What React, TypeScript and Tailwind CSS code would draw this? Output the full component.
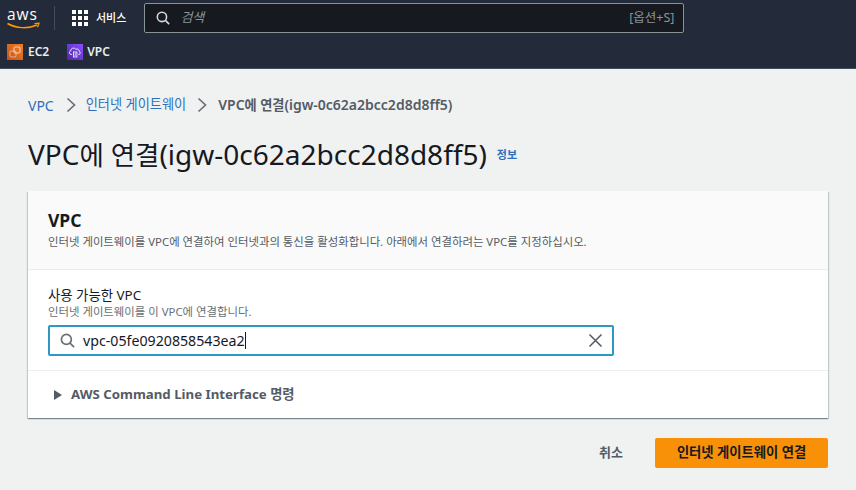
import React from "react";

function AwsLogo() {
  return (
    <svg width="34" height="31" viewBox="0 0 34 31" fill="none">
      <text x="0" y="18" fill="#fff" fontSize="15.5" fontFamily="'Open Sans', sans-serif" textLength="30">aws</text>
      <path d="M0.5 21.5C9 26.5 21 27 30 23" stroke="#f90" strokeWidth="1.5" fill="none" />
      <path d="M27.5 21.6L32 21.2L30.5 25.3" stroke="#f90" strokeWidth="1.2" fill="none" />
    </svg>
  );
}

function Ec2Icon() {
  return (
    <svg width="16" height="16" viewBox="0 0 16 16">
      <defs>
        <linearGradient id="ec" x1="0" y1="1" x2="1" y2="0">
          <stop offset="0" stopColor="#c8511b" />
          <stop offset="1" stopColor="#f08020" />
        </linearGradient>
      </defs>
      <rect width="16" height="16" fill="url(#ec)" />
      <rect x="3" y="7" width="6" height="6" rx="1" fill="none" stroke="#fff" strokeOpacity="0.55" strokeWidth="0.9" />
      <rect x="7" y="3" width="6" height="6" rx="1" fill="none" stroke="#fff" strokeOpacity="0.75" strokeWidth="0.9" />
    </svg>
  );
}

function VpcIcon() {
  return (
    <svg width="16" height="16" viewBox="0 0 16 16">
      <defs>
        <linearGradient id="vp" x1="0" y1="1" x2="1" y2="0">
          <stop offset="0" stopColor="#4d27a8" />
          <stop offset="1" stopColor="#8c4fff" />
        </linearGradient>
      </defs>
      <rect width="16" height="16" fill="url(#vp)" />
      <path d="M5 10.5H4a1.8 1.8 0 0 1-.3-3.5A2.8 2.8 0 0 1 8.8 5.3a2.2 2.2 0 0 1 3.4 2A1.7 1.7 0 0 1 12 10.5h-.8" fill="none" stroke="#fff" strokeWidth="0.8" />
      <rect x="6.5" y="8" width="3.4" height="5" fill="none" stroke="#fff" strokeWidth="0.8" />
      <path d="M8.2 9v3" stroke="#fff" strokeWidth="0.7" />
    </svg>
  );
}

function GridIcon() {
  return (
    <svg width="16" height="16" viewBox="0 0 16 16" fill="#fff">
      {[0, 6, 12].flatMap((y) =>
        [0, 6, 12].map((x) => <rect key={`${x}-${y}`} x={x} y={y} width="4" height="4" />)
      )}
    </svg>
  );
}

function SearchIcon({ color, size }: { color: string; size: number }) {
  return (
    <svg width={size} height={size} viewBox="0 0 16 16" fill="none" stroke={color} strokeWidth="1.8">
      <circle cx="6.8" cy="6.8" r="5.3" />
      <path d="M10.7 10.7L15 15" />
    </svg>
  );
}

function Chevron() {
  return (
    <svg width="10" height="16" viewBox="0 0 10 16" fill="none" stroke="#687078" strokeWidth="1.7">
      <path d="M1.5 1.5L8.5 8L1.5 14.5" />
    </svg>
  );
}

export default function App() {
  return (
    <div
      className="w-[856px] h-[490px] overflow-hidden bg-[#f0f2f2] flex flex-col text-[#16191f]"
      style={{ fontFamily: "'Noto Sans', 'Noto Sans CJK KR', sans-serif" }}
    >
      <header className="h-[69px] bg-[#232b3a] border-b border-[#414d5c] flex flex-col shrink-0">
        <div className="h-[36px] flex items-center">
          <div className="ml-[7px] w-[34px] h-[31px] mt-[-1px]">
            <AwsLogo />
          </div>
          <div className="ml-[13px] w-px h-[24px] bg-[#414d5c]" />
          <div className="ml-[17px]">
            <GridIcon />
          </div>
          <span className="ml-[8px] text-[11px] text-white font-medium">서비스</span>
          <div className="ml-[18px] w-[540px] h-[30px] bg-[#16191f] border border-[#879596] rounded-[2px] flex items-center pl-[11px] pr-[9px]">
            <SearchIcon color="#d5dbdb" size={14} />
            <span className="ml-[10px] text-[13px] italic text-[#879596]">검색</span>
            <span className="ml-auto text-[12.5px] text-[#879596]">[옵션+S]</span>
          </div>
        </div>
        <div className="h-[32px] flex items-center pl-[7px]">
          <Ec2Icon />
          <span className="ml-[5px] text-[12px] font-semibold text-[#eaeded]">EC2</span>
          <span className="ml-[18px]">
            <VpcIcon />
          </span>
          <span className="ml-[4px] text-[12px] font-semibold text-[#eaeded]">VPC</span>
        </div>
      </header>

      <main className="flex-1 px-[28px] flex flex-col">
        <nav className="h-[16px] mt-[28px] flex items-center text-[13.2px]">
          <span className="text-[14px] text-[#2f6fbd]">VPC</span>
          <span className="ml-[12px]">
            <Chevron />
          </span>
          <span className="ml-[10px] text-[#2f6fbd]">인터넷 게이트웨이</span>
          <span className="ml-[11px]">
            <Chevron />
          </span>
          <span className="ml-[11px] font-semibold text-[#545b64]">
            <span className="text-[14px]">VPC</span>에 연결<span className="text-[14px]">(igw-0c62a2bcc2d8d8ff5)</span>
          </span>
        </nav>

        <div className="mt-[23px] h-[36px] flex items-center">
          <h1 className="text-[26.5px] font-normal leading-[36px]">
            <span className="text-[28px]">VPC</span>에 연결<span className="text-[28px]">(igw-0c62a2bcc2d8d8ff5)</span>
          </h1>
          <span className="ml-[10px] mt-[2px] text-[11px] font-semibold text-[#2f6fbd]">정보</span>
        </div>

        <section className="mt-[19px] w-[800px] bg-white shadow-[0_1px_1px_0_rgba(0,28,36,0.3),1px_1px_1px_0_rgba(0,28,36,0.15),-1px_1px_1px_0_rgba(0,28,36,0.15)]">
          <div className="h-[79px] bg-[#fafafa] border-b border-[#eaeded] px-[20px] pt-[17px]">
            <h2 className="text-[17.5px] font-bold leading-[24px]">VPC</h2>
            <p className="text-[11.4px] leading-[14px] mt-[3px] text-[#545b64]">
              인터넷 게이트웨이를 VPC에 연결하여 인터넷과의 통신을 활성화합니다. 아래에서 연결하려는 VPC를 지정하십시오.
            </p>
          </div>
          <div className="h-[101px] border-b border-[#eaeded] px-[20px] pt-[16px]">
            <div className="text-[13.4px] leading-[19px]">사용 가능한 VPC</div>
            <div className="text-[11.4px] leading-[14px] text-[#687078]">인터넷 게이트웨이를 이 VPC에 연결합니다.</div>
            <div className="mt-[6px] w-[566px] h-[31px] bg-white border-2 border-[#2e97c4] rounded-[2px] flex items-center pl-[10px] pr-[9px]">
              <SearchIcon color="#687078" size={15} />
              <span className="ml-[8px] text-[14.2px] leading-[20px] text-[#16191f]">vpc-05fe0920858543ea2</span>
              <span className="w-px h-[17px] bg-[#16191f]" />
              <svg className="ml-auto" width="15" height="15" viewBox="0 0 15 15" fill="none" stroke="#545b64" strokeWidth="1.5">
                <path d="M1.5 1.5L13.5 13.5M13.5 1.5L1.5 13.5" />
              </svg>
            </div>
          </div>
          <div className="h-[47px] flex items-center pl-[25px]">
            <svg width="9" height="10" viewBox="0 0 9 10" fill="#545b64">
              <path d="M1 0L9 5L1 10Z" />
            </svg>
            <span className="ml-[9px] text-[13.25px] font-bold text-[#545b64]">AWS Command Line Interface 명령</span>
          </div>
        </section>

        <div className="mt-[20px] w-[800px] flex items-center justify-end">
          <span className="text-[13px] font-semibold text-[#545b64]">취소</span>
          <button className="ml-[32px] w-[173px] h-[30px] bg-[#f89008] rounded-[2px] text-[13.3px] font-semibold text-[#16191f]">
            인터넷 게이트웨이 연결
          </button>
        </div>
      </main>
    </div>
  );
}
